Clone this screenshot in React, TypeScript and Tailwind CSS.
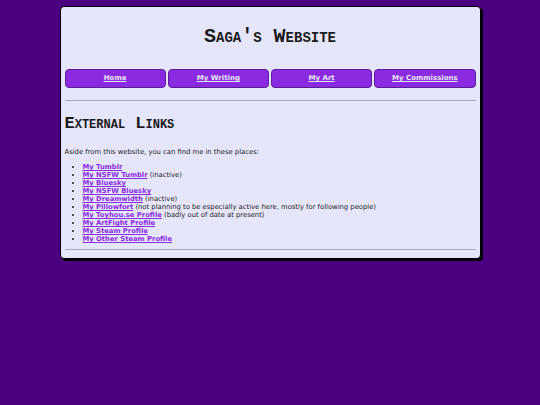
import React from "react";

const links: { label: string; note?: string }[] = [
  { label: "My Tumblr" },
  { label: "My NSFW Tumblr", note: "(inactive)" },
  { label: "My Bluesky" },
  { label: "My NSFW Bluesky" },
  { label: "My Dreamwidth", note: "(inactive)" },
  { label: "My Pillowfort", note: "(not planning to be especially active here, mostly for following people)" },
  { label: "My Toyhou.se Profile", note: "(badly out of date at present)" },
  { label: "My ArtFight Profile" },
  { label: "My Steam Profile" },
  { label: "My Other Steam Profile" },
];

const nav = ["Home", "My Writing", "My Art", "My Commissions"];

export default function App() {
  return (
    <div className="min-h-screen bg-[#4b0082] pt-[6px] font-['DejaVu_Sans',Verdana,sans-serif]">
      <div className="mx-auto w-[421px] rounded-[4px] border border-black bg-[#e6e6fa] px-[4px] pb-[8px] shadow-[2px_2px_0_#000]">
        <h1 className="mt-[18px] text-center font-['Liberation_Mono',monospace] text-[20px] font-bold leading-[24px] text-[#1a1a1a] [font-variant-caps:small-caps]">
          Saga's Website
        </h1>
        <nav className="mt-[20px] flex gap-[2px]">
          {nav.map((n) => (
            <a
              key={n}
              href="#"
              className="flex h-[19px] flex-1 items-center justify-center rounded-[4px] border border-[#5b1c9a] bg-[#8a2be2] text-[7px] font-bold text-[#e6e6fa] underline"
            >
              {n}
            </a>
          ))}
        </nav>
        <hr className="mt-[12px] border-t border-[#a8a8b8]" />
        <h2 className="mt-[13px] font-['Liberation_Mono',monospace] text-[17px] font-bold leading-[20px] text-[#1a1a1a] [font-variant-caps:small-caps]">
          External Links
        </h2>
        <p className="mt-[14px] text-[6.8px] leading-[8px] text-[#222]">
          Aside from this website, you can find me in these places:
        </p>
        <ul className="mt-[7px] list-disc pl-[18px] text-[6.8px] leading-[8px] text-[#222]">
          {links.map((l) => (
            <li key={l.label}>
              <a href="#" className="font-bold text-[#8a2be2] underline">
                {l.label}
              </a>
              {l.note ? " " + l.note : ""}
            </li>
          ))}
        </ul>
        <hr className="mt-[6px] border-t border-[#a8a8b8]" />
      </div>
    </div>
  );
}
